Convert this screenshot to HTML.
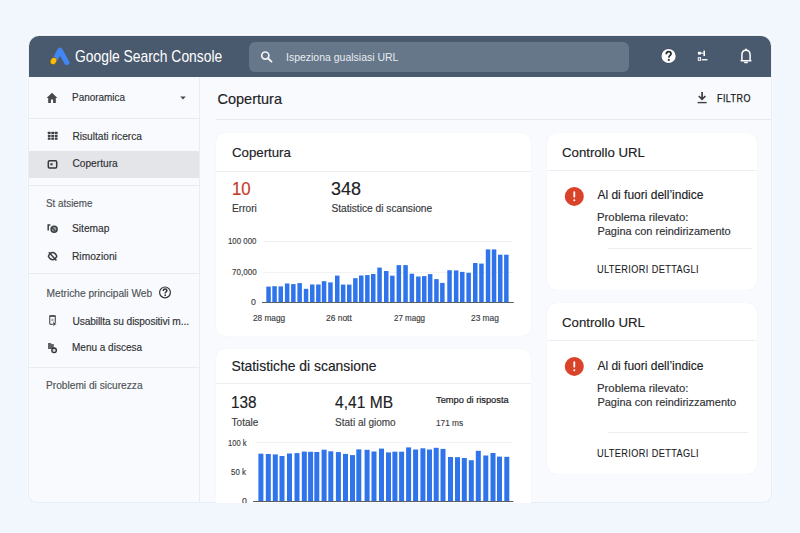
<!DOCTYPE html>
<html><head><meta charset="utf-8"><style>
html,body{margin:0;padding:0;}
body{width:800px;height:533px;overflow:hidden;position:relative;background:#f2f7fd;font-family:"Liberation Sans", sans-serif;}
.t{position:absolute;white-space:nowrap;-webkit-text-stroke:0.15px currentColor;}
.r{position:absolute;}
svg.r{overflow:visible;}
</style></head><body>
<div class="r" style="left:27px;top:34px;width:746px;height:470px;border-radius:12px;background:rgba(255,255,255,0.6)"></div>
<div class="r" style="left:29.00px;top:36.00px;width:742.00px;height:466.00px;background:#f8fafd;border-radius:10px 10px 8px 8px;box-shadow:0 0 0 1px #e9eef4, 0 1px 3px rgba(80,100,130,0.06);"></div>
<div class="r" style="left:29.00px;top:36.00px;width:742.00px;height:41.00px;background:#4a5a6e;border-radius:10px 10px 0 0;"></div>
<svg class="r" style="left:0;top:0" width="800" height="533"><path d="M54.8,60 L60,50.2 L66.8,62.4" fill="none" stroke="#4285f4" stroke-width="5.2" stroke-linecap="round" stroke-linejoin="round"/><ellipse cx="53.5" cy="61" rx="3.9" ry="3.1" transform="rotate(-58 53.5 61)" fill="#fbbc04" stroke="#2c3440" stroke-width="0.5"/></svg>
<div class="t" style="left:75.31px;top:48.387px;font-size:16.20px;line-height:16.20px;color:#ffffff;font-weight:400;letter-spacing:0px;transform:scaleX(0.8567);transform-origin:0 0;-webkit-text-stroke:0;">Google Search Console</div>
<div class="r" style="left:249.25px;top:41.50px;width:380.05px;height:30.50px;background:#66778a;border-radius:6px;"></div>
<svg class="r" style="left:0;top:0" width="800" height="533"><circle cx="265.3" cy="55.6" r="3.6" fill="none" stroke="#f1f3f5" stroke-width="1.7"/><path d="M267.9,58.2 L271.5,61.6" stroke="#f1f3f5" stroke-width="1.9" stroke-linecap="round"/></svg>
<div class="t" style="left:285.86px;top:52.123px;font-size:10.90px;line-height:10.90px;color:#e8ecf0;font-weight:400;letter-spacing:0px;transform:scaleX(0.9620);transform-origin:0 0;-webkit-text-stroke:0;">Ispeziona gualsiasi URL</div>
<svg class="r" style="left:0;top:0" width="800" height="533"><circle cx="668.6" cy="56" r="7.6" fill="#2f3a48" opacity="0.5"/><circle cx="668.6" cy="56" r="7.1" fill="#ffffff"/><path d="M666.3,54.2 C666.3,52.4 667.3,51.6 668.7,51.6 C670.1,51.6 671,52.5 671,53.7 C671,55.3 668.9,55.6 668.8,57.6" fill="none" stroke="#2a2d31" stroke-width="1.8"/><circle cx="668.8" cy="59.9" r="1.05" fill="#2a2d31"/></svg>
<svg class="r" style="left:0;top:0" width="800" height="533"><g fill="#ffffff"><rect x="697.9" y="51.8" width="3" height="2.7"/><rect x="703.4" y="50.6" width="1.6" height="5.4"/><rect x="700.6" y="52.6" width="3" height="1.1"/><rect x="698.3" y="57.7" width="2.3" height="2.6" fill="none" stroke="#ffffff" stroke-width="1"/><rect x="701.9" y="59.1" width="5.6" height="1.3"/></g></svg>
<svg class="r" style="left:0;top:0" width="800" height="533"><path d="M741.9,60.4 L741.9,55 C741.9,51.8 743.5,50.2 746,50.2 C748.5,50.2 750.1,51.8 750.1,55 L750.1,60.4 M740.6,60.8 L751.4,60.8" fill="none" stroke="#ffffff" stroke-width="1.5" stroke-linejoin="round"/><path d="M744.8,62.6 L747.2,62.6" stroke="#fff" stroke-width="1.5" stroke-linecap="round"/><circle cx="746" cy="49.4" r="0.9" fill="#fff"/></svg>
<div class="r" style="left:199.00px;top:77.00px;width:1.00px;height:425.00px;background:#e9ecf1;"></div>
<svg class="r" style="left:0;top:0" width="800" height="533"><path d="M46.6,98 L52,92.8 L57.4,98 L55.8,98 L55.8,103 L53.1,103 L53.1,99.6 L50.9,99.6 L50.9,103 L48.2,103 L48.2,98 Z" fill="#45484c"/><path d="M180.2,96.6 L185.8,96.6 L183,99.6 Z" fill="#45484c"/></svg>
<div class="t" style="left:72.20px;top:92.916px;font-size:10.20px;line-height:10.20px;color:#303134;font-weight:400;letter-spacing:0px;transform:scaleX(0.9757);transform-origin:0 0;">Panoramica</div>
<div class="r" style="left:29.00px;top:117.50px;width:170.00px;height:1.00px;background:#e8ebef;"></div>
<svg class="r" style="left:0;top:0" width="800" height="533"><rect x="47.8" y="131.8" width="2.8" height="2.3" rx="0.4" fill="#3c4043"/><rect x="47.8" y="134.7" width="2.8" height="2.3" rx="0.4" fill="#3c4043"/><rect x="47.8" y="137.5" width="2.8" height="2.3" rx="0.4" fill="#3c4043"/><rect x="51.3" y="131.8" width="2.8" height="2.3" rx="0.4" fill="#3c4043"/><rect x="51.3" y="134.7" width="2.8" height="2.3" rx="0.4" fill="#3c4043"/><rect x="51.3" y="137.5" width="2.8" height="2.3" rx="0.4" fill="#3c4043"/><rect x="54.8" y="131.8" width="2.8" height="2.3" rx="0.4" fill="#3c4043"/><rect x="54.8" y="134.7" width="2.8" height="2.3" rx="0.4" fill="#3c4043"/><rect x="54.8" y="137.5" width="2.8" height="2.3" rx="0.4" fill="#3c4043"/></svg>
<div class="t" style="left:72.40px;top:131.916px;font-size:10.2px;line-height:10.2px;color:#303134;font-weight:400;letter-spacing:0px;">Risultati ricerca</div>
<div class="r" style="left:29.00px;top:150.60px;width:170.00px;height:27.40px;background:#e3e5e9;"></div>
<svg class="r" style="left:0;top:0" width="800" height="533"><rect x="48.3" y="160.8" width="8.4" height="7.2" rx="1.2" fill="none" stroke="#35373a" stroke-width="1.5"/><rect x="50.4" y="163.3" width="2.2" height="2" fill="#35373a"/></svg>
<div class="t" style="left:72.40px;top:158.916px;font-size:10.2px;line-height:10.2px;color:#303134;font-weight:400;letter-spacing:0px;">Copertura</div>
<div class="r" style="left:29.00px;top:184.80px;width:170.00px;height:1.00px;background:#e8ebef;"></div>
<div class="t" style="left:46.06px;top:198.916px;font-size:10.20px;line-height:10.20px;color:#4f5256;font-weight:400;letter-spacing:0px;transform:scaleX(0.9666);transform-origin:0 0;">St atsieme</div>
<svg class="r" style="left:0;top:0" width="800" height="533"><path d="M48.2,230.4 L48.2,225 L50.4,225" fill="none" stroke="#3c4043" stroke-width="1.5"/><circle cx="54.1" cy="229.2" r="3" fill="#9aa0a6" stroke="#3c4043" stroke-width="1.5"/><path d="M52.3,228 L55.4,231.2" stroke="#3c4043" stroke-width="1.2"/></svg>
<div class="t" style="left:71.94px;top:223.916px;font-size:10.20px;line-height:10.20px;color:#303134;font-weight:400;letter-spacing:0px;transform:scaleX(1.0023);transform-origin:0 0;">Sitemap</div>
<svg class="r" style="left:0;top:0" width="800" height="533"><path d="M48.4,256.2 C49.6,253.6 51,252.6 52.6,252.6 C54.2,252.6 55.6,253.6 56.8,256.2 C55.6,258.8 54.2,259.8 52.6,259.8 C51,259.8 49.6,258.8 48.4,256.2 Z" fill="none" stroke="#3c4043" stroke-width="1.5"/><path d="M48.8,252.2 L56.4,260.4" stroke="#3c4043" stroke-width="1.5"/></svg>
<div class="t" style="left:71.58px;top:251.916px;font-size:10.20px;line-height:10.20px;color:#303134;font-weight:400;letter-spacing:0px;transform:scaleX(1.0023);transform-origin:0 0;">Rimozioni</div>
<div class="r" style="left:29.00px;top:273.10px;width:170.00px;height:1.00px;background:#e8ebef;"></div>
<div class="t" style="left:46.50px;top:288.916px;font-size:10.2px;line-height:10.2px;color:#4f5256;font-weight:400;letter-spacing:0px;">Metriche principali Web</div>
<svg class="r" style="left:0;top:0" width="800" height="533"><circle cx="165" cy="292.4" r="5.4" fill="none" stroke="#303134" stroke-width="1.2"/><path d="M163.3,290.9 C163.3,289.5 164.1,288.9 165.1,288.9 C166.2,288.9 166.9,289.6 166.9,290.5 C166.9,291.7 165.3,291.9 165.2,293.5" fill="none" stroke="#303134" stroke-width="1.5"/><circle cx="165.2" cy="295.2" r="0.85" fill="#303134"/></svg>
<svg class="r" style="left:0;top:0" width="800" height="533"><rect x="49.7" y="315.7" width="5.6" height="8.6" rx="1" fill="none" stroke="#55585c" stroke-width="1.2"/><rect x="49.4" y="315.2" width="6.2" height="1.8" rx="0.6" fill="#55585c"/><rect x="51.4" y="318.8" width="2.2" height="2.2" fill="#a4a7ab"/><path d="M53,321.6 L56.6,324 L53,326.2 Z" fill="#3c4043" stroke="#ffffff" stroke-width="0.5"/></svg>
<div class="t" style="left:72.40px;top:316.916px;font-size:10.2px;line-height:10.2px;color:#303134;font-weight:400;letter-spacing:-0.1px;">Usabillta su dispositivi m...</div>
<svg class="r" style="left:0;top:0" width="800" height="533"><path d="M48,343 L50.8,343 L51.6,344 L53.8,344 L53.8,349 L48,349 Z" fill="#5f6368"/><circle cx="54.1" cy="350.3" r="2.3" fill="#d4d6d9" stroke="#303134" stroke-width="1.3"/></svg>
<div class="t" style="left:71.60px;top:342.916px;font-size:10.20px;line-height:10.20px;color:#303134;font-weight:400;letter-spacing:0px;transform:scaleX(0.9811);transform-origin:0 0;">Menu a discesa</div>
<div class="r" style="left:29.00px;top:366.90px;width:170.00px;height:1.00px;background:#e8ebef;"></div>
<div class="t" style="left:45.69px;top:380.916px;font-size:10.20px;line-height:10.20px;color:#4f5256;font-weight:400;letter-spacing:0px;transform:scaleX(0.9976);transform-origin:0 0;">Problemi di sicurezza</div>
<div class="t" style="left:217.50px;top:92.126px;font-size:14.5px;line-height:14.5px;color:#202124;font-weight:400;letter-spacing:0px;">Copertura</div>
<svg class="r" style="left:0;top:0" width="800" height="533"><path d="M702.1,92 L702.1,99 M698.8,96 L702.1,99.4 L705.4,96" fill="none" stroke="#3c4043" stroke-width="1.7"/><path d="M697.6,102.6 L706.6,102.6" stroke="#3c4043" stroke-width="1.4"/></svg>
<div class="t" style="left:716.98px;top:94.035px;font-size:10.00px;line-height:10.00px;color:#1c1d20;font-weight:400;letter-spacing:0.5px;transform:scaleX(0.8960);transform-origin:0 0;-webkit-text-stroke:0.25px #1c1d20;">FILTRO</div>
<div class="r" style="left:215.70px;top:118.60px;width:555.30px;height:1.00px;background:#e6e9ee;"></div>
<div class="r" style="left:216.40px;top:132.50px;width:314.30px;height:203.50px;background:#ffffff;border-radius:10px;box-shadow:0 0 2px rgba(60,80,110,0.06);"></div>
<div class="t" style="left:231.54px;top:146.082px;font-size:13.43px;line-height:13.43px;color:#202124;font-weight:400;letter-spacing:0px;transform:scaleX(0.9860);transform-origin:0 0;">Copertura</div>
<div class="r" style="left:216.40px;top:170.50px;width:314.30px;height:1.00px;background:#eceef1;"></div>
<div class="t" style="left:232.34px;top:180.113px;font-size:18.00px;line-height:18.00px;color:#c5392b;font-weight:400;letter-spacing:0px;transform:scaleX(0.9333);transform-origin:0 0;">10</div>
<div class="t" style="left:231.59px;top:203.277px;font-size:10.60px;line-height:10.60px;color:#34373a;font-weight:400;letter-spacing:0px;transform:scaleX(0.9578);transform-origin:0 0;">Errori</div>
<div class="t" style="left:330.68px;top:180.113px;font-size:18.00px;line-height:18.00px;color:#202124;font-weight:400;letter-spacing:0px;transform:scaleX(0.9989);transform-origin:0 0;">348</div>
<div class="t" style="left:331.40px;top:203.916px;font-size:10.2px;line-height:10.2px;color:#34373a;font-weight:400;letter-spacing:0px;">Statistice di scansione</div>
<div class="t" style="left:227.71px;top:237.189px;font-size:8.40px;line-height:8.40px;color:#3c4043;font-weight:400;letter-spacing:0px;transform:scaleX(0.9374);transform-origin:0 0;">100 000</div>
<div class="t" style="left:231.50px;top:268.189px;font-size:8.40px;line-height:8.40px;color:#3c4043;font-weight:400;letter-spacing:0px;transform:scaleX(0.9604);transform-origin:0 0;">70,000</div>
<div class="t" style="left:251.35px;top:298.189px;font-size:8.40px;line-height:8.40px;color:#3c4043;font-weight:400;letter-spacing:0px;transform:scaleX(1.0417);transform-origin:0 0;">0</div>
<div class="r" style="left:263.40px;top:241.40px;width:249.00px;height:1.00px;background:#eff1f3;"></div>
<div class="r" style="left:263.40px;top:271.80px;width:249.00px;height:1.00px;background:#f1f2f4;"></div>
<svg class="r" style="left:0;top:0" width="800" height="533"><rect x="266.30" y="286.60" width="4.5" height="16.00" fill="#2f74ea"/><rect x="272.30" y="286.20" width="4.5" height="16.40" fill="#2f74ea"/><rect x="278.50" y="286.40" width="4.5" height="16.20" fill="#2f74ea"/><rect x="284.90" y="283.50" width="4.5" height="19.10" fill="#2f74ea"/><rect x="291.10" y="284.10" width="4.5" height="18.50" fill="#2f74ea"/><rect x="297.40" y="283.10" width="4.5" height="19.50" fill="#2f74ea"/><rect x="303.80" y="288.80" width="4.5" height="13.80" fill="#2f74ea"/><rect x="310.00" y="284.50" width="4.5" height="18.10" fill="#2f74ea"/><rect x="316.10" y="284.50" width="4.5" height="18.10" fill="#2f74ea"/><rect x="321.80" y="281.20" width="4.5" height="21.40" fill="#2f74ea"/><rect x="328.20" y="282.40" width="4.5" height="20.20" fill="#2f74ea"/><rect x="335.00" y="275.60" width="4.5" height="27.00" fill="#2f74ea"/><rect x="340.90" y="284.60" width="4.5" height="18.00" fill="#2f74ea"/><rect x="347.00" y="284.60" width="4.5" height="18.00" fill="#2f74ea"/><rect x="353.10" y="278.20" width="4.5" height="24.40" fill="#2f74ea"/><rect x="359.00" y="275.50" width="4.5" height="27.10" fill="#2f74ea"/><rect x="365.10" y="275.10" width="4.5" height="27.50" fill="#2f74ea"/><rect x="371.00" y="274.00" width="4.5" height="28.60" fill="#2f74ea"/><rect x="377.30" y="267.60" width="4.5" height="35.00" fill="#2f74ea"/><rect x="384.00" y="271.00" width="4.5" height="31.60" fill="#2f74ea"/><rect x="390.10" y="275.70" width="4.5" height="26.90" fill="#2f74ea"/><rect x="396.60" y="265.10" width="4.5" height="37.50" fill="#2f74ea"/><rect x="403.30" y="265.10" width="4.5" height="37.50" fill="#2f74ea"/><rect x="409.60" y="273.70" width="4.5" height="28.90" fill="#2f74ea"/><rect x="416.10" y="276.50" width="4.5" height="26.10" fill="#2f74ea"/><rect x="422.00" y="276.10" width="4.5" height="26.50" fill="#2f74ea"/><rect x="427.90" y="274.10" width="4.5" height="28.50" fill="#2f74ea"/><rect x="434.20" y="279.10" width="4.5" height="23.50" fill="#2f74ea"/><rect x="440.10" y="282.90" width="4.5" height="19.70" fill="#2f74ea"/><rect x="447.30" y="270.20" width="4.5" height="32.40" fill="#2f74ea"/><rect x="453.90" y="270.40" width="4.5" height="32.20" fill="#2f74ea"/><rect x="460.00" y="271.90" width="4.5" height="30.70" fill="#2f74ea"/><rect x="466.40" y="272.80" width="4.5" height="29.80" fill="#2f74ea"/><rect x="473.00" y="263.00" width="4.5" height="39.60" fill="#2f74ea"/><rect x="479.20" y="263.60" width="4.5" height="39.00" fill="#2f74ea"/><rect x="485.80" y="249.40" width="4.5" height="53.20" fill="#2f74ea"/><rect x="491.80" y="249.40" width="4.5" height="53.20" fill="#2f74ea"/><rect x="498.00" y="254.70" width="4.5" height="47.90" fill="#2f74ea"/><rect x="504.10" y="254.70" width="4.5" height="47.90" fill="#2f74ea"/><rect x="262" y="302" width="251.8" height="1" fill="#5d6166"/></svg>
<div class="t" style="left:252.59px;top:314.189px;font-size:8.40px;line-height:8.40px;color:#3c4043;font-weight:400;letter-spacing:0px;transform:scaleX(0.9839);transform-origin:0 0;">28 magg</div>
<div class="t" style="left:325.98px;top:314.189px;font-size:8.40px;line-height:8.40px;color:#3c4043;font-weight:400;letter-spacing:0px;transform:scaleX(1.0079);transform-origin:0 0;">26 nott</div>
<div class="t" style="left:394.40px;top:314.189px;font-size:8.40px;line-height:8.40px;color:#3c4043;font-weight:400;letter-spacing:0px;transform:scaleX(0.9524);transform-origin:0 0;">27 magg</div>
<div class="t" style="left:471.38px;top:314.189px;font-size:8.40px;line-height:8.40px;color:#3c4043;font-weight:400;letter-spacing:0px;transform:scaleX(0.9982);transform-origin:0 0;">23 mag</div>
<div class="r" style="left:216.40px;top:348.60px;width:315.10px;height:191.40px;background:#ffffff;border-radius:10px;box-shadow:0 0 2px rgba(60,80,110,0.06);"></div>
<div class="t" style="left:231.40px;top:359.884px;font-size:13.9px;line-height:13.9px;color:#202124;font-weight:400;letter-spacing:0px;">Statistiche di scansione</div>
<div class="r" style="left:216.40px;top:382.80px;width:315.10px;height:1.00px;background:#eceef1;"></div>
<div class="t" style="left:231.25px;top:393.991px;font-size:17.14px;line-height:17.14px;color:#202124;font-weight:400;letter-spacing:0px;transform:scaleX(0.8958);transform-origin:0 0;">138</div>
<div class="t" style="left:231.60px;top:418.035px;font-size:10px;line-height:10px;color:#3c4043;font-weight:400;letter-spacing:0px;">Totale</div>
<div class="t" style="left:334.79px;top:394.060px;font-size:17.00px;line-height:17.00px;color:#202124;font-weight:400;letter-spacing:0px;transform:scaleX(0.9170);transform-origin:0 0;">4,41 MB</div>
<div class="t" style="left:335.10px;top:418.035px;font-size:10px;line-height:10px;color:#3c4043;font-weight:400;letter-spacing:0px;">Stati al giomo</div>
<div class="t" style="left:435.81px;top:395.836px;font-size:9.29px;line-height:9.29px;color:#202124;font-weight:400;letter-spacing:0px;transform:scaleX(0.9986);transform-origin:0 0;-webkit-text-stroke:0.2px #202124;">Tempo di risposta</div>
<div class="t" style="left:436.18px;top:419.000px;font-size:8.86px;line-height:8.86px;color:#3c4043;font-weight:400;letter-spacing:0px;transform:scaleX(0.9364);transform-origin:0 0;-webkit-text-stroke:0.15px #3c4043;">171 ms</div>
<div class="t" style="left:227.63px;top:439.189px;font-size:8.40px;line-height:8.40px;color:#3c4043;font-weight:400;letter-spacing:0px;transform:scaleX(0.9042);transform-origin:0 0;">100 k</div>
<div class="t" style="left:231.28px;top:468.189px;font-size:8.40px;line-height:8.40px;color:#3c4043;font-weight:400;letter-spacing:0px;transform:scaleX(0.9395);transform-origin:0 0;">50 k</div>
<div class="t" style="left:241.65px;top:497.189px;font-size:8.40px;line-height:8.40px;color:#3c4043;font-weight:400;letter-spacing:0px;transform:scaleX(1.0417);transform-origin:0 0;">0</div>
<div class="r" style="left:256.00px;top:442.20px;width:256.00px;height:1.00px;background:#eff1f3;"></div>
<svg class="r" style="left:0;top:0" width="800" height="533"><rect x="258.40" y="453.70" width="5.0" height="47.30" fill="#2f74ea"/><rect x="265.80" y="454.00" width="5.0" height="47.00" fill="#2f74ea"/><rect x="272.80" y="454.40" width="5.0" height="46.60" fill="#2f74ea"/><rect x="279.50" y="456.00" width="5.0" height="45.00" fill="#2f74ea"/><rect x="287.00" y="453.50" width="5.0" height="47.50" fill="#2f74ea"/><rect x="294.50" y="453.10" width="5.0" height="47.90" fill="#2f74ea"/><rect x="301.80" y="451.60" width="5.0" height="49.40" fill="#2f74ea"/><rect x="308.10" y="451.80" width="5.0" height="49.20" fill="#2f74ea"/><rect x="314.30" y="452.00" width="5.0" height="49.00" fill="#2f74ea"/><rect x="321.60" y="449.70" width="5.0" height="51.30" fill="#2f74ea"/><rect x="328.30" y="451.30" width="5.0" height="49.70" fill="#2f74ea"/><rect x="335.90" y="452.10" width="5.0" height="48.90" fill="#2f74ea"/><rect x="343.00" y="453.90" width="5.0" height="47.10" fill="#2f74ea"/><rect x="350.00" y="455.10" width="5.0" height="45.90" fill="#2f74ea"/><rect x="356.30" y="449.40" width="5.0" height="51.60" fill="#2f74ea"/><rect x="364.60" y="449.80" width="5.0" height="51.20" fill="#2f74ea"/><rect x="371.50" y="451.50" width="5.0" height="49.50" fill="#2f74ea"/><rect x="379.00" y="448.60" width="5.0" height="52.40" fill="#2f74ea"/><rect x="386.00" y="452.40" width="5.0" height="48.60" fill="#2f74ea"/><rect x="392.40" y="451.70" width="5.0" height="49.30" fill="#2f74ea"/><rect x="399.10" y="451.70" width="5.0" height="49.30" fill="#2f74ea"/><rect x="406.10" y="447.40" width="5.0" height="53.60" fill="#2f74ea"/><rect x="413.10" y="449.50" width="5.0" height="51.50" fill="#2f74ea"/><rect x="420.40" y="448.30" width="5.0" height="52.70" fill="#2f74ea"/><rect x="427.00" y="449.50" width="5.0" height="51.50" fill="#2f74ea"/><rect x="433.70" y="447.80" width="5.0" height="53.20" fill="#2f74ea"/><rect x="440.50" y="448.90" width="5.0" height="52.10" fill="#2f74ea"/><rect x="448.00" y="457.00" width="5.0" height="44.00" fill="#2f74ea"/><rect x="455.00" y="457.20" width="5.0" height="43.80" fill="#2f74ea"/><rect x="461.80" y="458.00" width="5.0" height="43.00" fill="#2f74ea"/><rect x="468.80" y="460.20" width="5.0" height="40.80" fill="#2f74ea"/><rect x="475.80" y="450.80" width="5.0" height="50.20" fill="#2f74ea"/><rect x="483.30" y="455.50" width="5.0" height="45.50" fill="#2f74ea"/><rect x="490.50" y="453.00" width="5.0" height="48.00" fill="#2f74ea"/><rect x="497.00" y="456.60" width="5.0" height="44.40" fill="#2f74ea"/><rect x="504.30" y="456.80" width="5.0" height="44.20" fill="#2f74ea"/><rect x="253" y="501" width="260.4" height="1" fill="#5d6166"/></svg>
<div class="r" style="left:546.80px;top:132.60px;width:210.20px;height:157.70px;background:#ffffff;border-radius:10px;box-shadow:0 0 2px rgba(60,80,110,0.06);"></div>
<div class="t" style="left:562.14px;top:146.082px;font-size:13.43px;line-height:13.43px;color:#202124;font-weight:400;letter-spacing:0px;transform:scaleX(0.9836);transform-origin:0 0;">Controllo URL</div>
<div class="r" style="left:546.80px;top:170.40px;width:210.20px;height:1.00px;background:#eceef1;"></div>
<svg class="r" style="left:0;top:0" width="800" height="533"><circle cx="574.3" cy="196.4" r="9.5" fill="#d8432a"/><rect x="573.4" y="191.2" width="1.8" height="6.4" rx="0.9" fill="#fff"/><circle cx="574.3" cy="200.2" r="1" fill="#fff"/></svg>
<div class="t" style="left:597.40px;top:189.192px;font-size:12px;line-height:12px;color:#202124;font-weight:400;letter-spacing:0px;">Al di fuori dell&#8217;indice</div>
<div class="t" style="left:597.19px;top:212.089px;font-size:11.00px;line-height:11.00px;color:#2f3134;font-weight:400;letter-spacing:0px;transform:scaleX(1.0319);transform-origin:0 0;">Problema rilevato:</div>
<div class="t" style="left:597.40px;top:226.089px;font-size:11px;line-height:11px;color:#2f3134;font-weight:400;letter-spacing:0px;">Pagina con reindirizamento</div>
<div class="r" style="left:607.50px;top:247.50px;width:144.00px;height:1.00px;background:#eceef1;"></div>
<div class="t" style="left:596.71px;top:264.234px;font-size:10.71px;line-height:10.71px;color:#202124;font-weight:400;letter-spacing:0.45px;transform:scaleX(0.8575);transform-origin:0 0;-webkit-text-stroke:0.1px #202124;">ULTERIORI DETTAGLI</div>
<div class="r" style="left:546.80px;top:302.60px;width:210.20px;height:171.20px;background:#ffffff;border-radius:10px;box-shadow:0 0 2px rgba(60,80,110,0.06);"></div>
<div class="t" style="left:562.14px;top:316.082px;font-size:13.43px;line-height:13.43px;color:#202124;font-weight:400;letter-spacing:0px;transform:scaleX(0.9836);transform-origin:0 0;">Controllo URL</div>
<div class="r" style="left:546.80px;top:340.40px;width:210.20px;height:1.00px;background:#eceef1;"></div>
<svg class="r" style="left:0;top:0" width="800" height="533"><circle cx="574.3" cy="366.4" r="9.5" fill="#d8432a"/><rect x="573.4" y="361.2" width="1.8" height="6.4" rx="0.9" fill="#fff"/><circle cx="574.3" cy="370.2" r="1" fill="#fff"/></svg>
<div class="t" style="left:597.40px;top:360.192px;font-size:12px;line-height:12px;color:#202124;font-weight:400;letter-spacing:0px;">Al di fuori dell&#8217;indice</div>
<div class="t" style="left:597.19px;top:383.088px;font-size:11.00px;line-height:11.00px;color:#2f3134;font-weight:400;letter-spacing:0px;transform:scaleX(1.0319);transform-origin:0 0;">Problema rilevato:</div>
<div class="t" style="left:597.40px;top:397.088px;font-size:11px;line-height:11px;color:#2f3134;font-weight:400;letter-spacing:0px;">Pagina con reindirizzamento</div>
<div class="r" style="left:608.20px;top:432.00px;width:139.80px;height:1.00px;background:#eceef1;"></div>
<div class="t" style="left:596.71px;top:448.234px;font-size:10.71px;line-height:10.71px;color:#202124;font-weight:400;letter-spacing:0.45px;transform:scaleX(0.8575);transform-origin:0 0;-webkit-text-stroke:0.1px #202124;">ULTERIORI DETTAGLI</div>
<div class="r" style="left:0.00px;top:502.50px;width:800.00px;height:30.50px;background:#f2f7fd;"></div>
</body></html>
